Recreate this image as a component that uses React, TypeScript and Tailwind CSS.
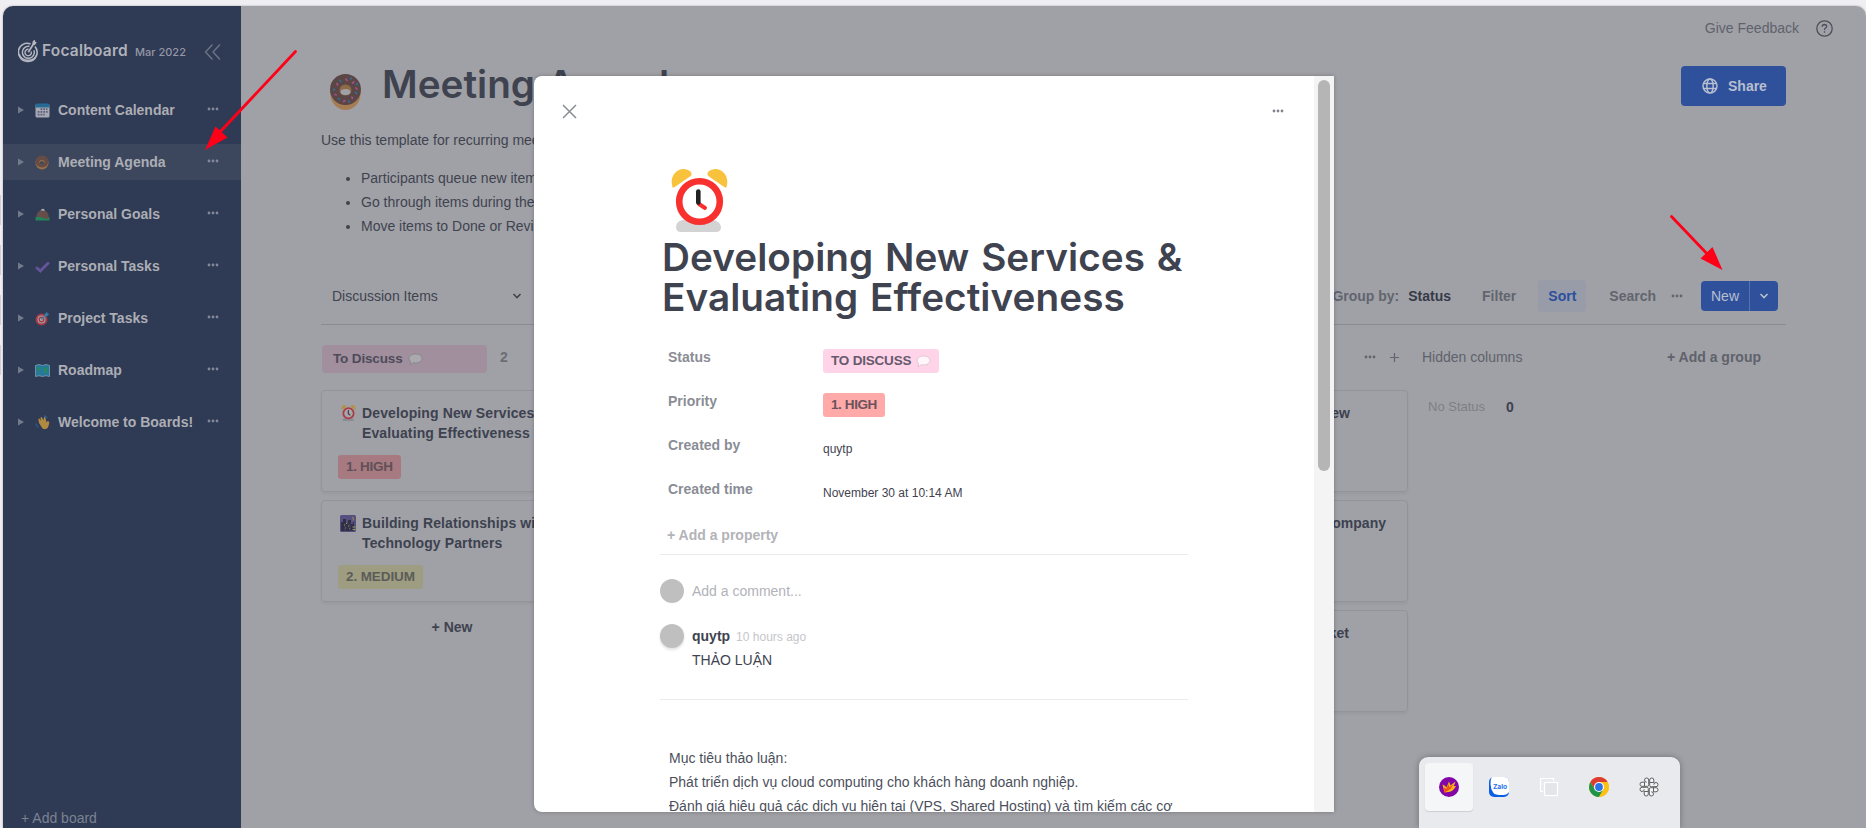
import React from 'react';

const Dots = ({ className = '' }: { className?: string }) => (
  <svg width="12" height="4" viewBox="0 0 12 4" className={`shrink-0 ${className}`} fill="currentColor">
    <circle cx="2" cy="2" r="1.4" />
    <circle cx="6" cy="2" r="1.4" />
    <circle cx="10" cy="2" r="1.4" />
  </svg>
);

const Chevron = () => (
  <svg width="10" height="8" viewBox="0 0 10 8" className="shrink-0" fill="none" stroke="currentColor" strokeWidth="1.6">
    <path d="M1.5 2 L5 5.5 L8.5 2" />
  </svg>
);

const Logo = () => (
  <svg width="21" height="24" viewBox="0 0 21 24" className="shrink-0" fill="none" stroke="#b4b7c0">
    <path d="M12.6 4.9 A9 9 0 0 0 2 8 A9.2 9.2 0 0 0 1.3 17 A9.3 9.3 0 0 0 18.5 16.5 A9 9 0 0 0 17 7.5" strokeWidth="1.6" />
    <path d="M1.3 15 A9.3 9.3 0 0 0 19 15 A9 7.500 0 0 1 1.3 15" fill="#b4b7c0" strokeWidth="1.2" />
    <path d="M11.5 7.4 A6 6 0 1 0 16 11.3" strokeWidth="1.5" />
    <path d="M10.5 10.3 A3.2 3.2 0 1 0 13.2 12.4" strokeWidth="1.4" />
    <path d="M10.3 13.3 L15.5 5" strokeWidth="1.7" />
    <path d="M14.2 5.5 L14.8 2 L17 .7 L17.2 2.7 L18.8 3.6 L16.6 6.2 Z" fill="#b4b7c0" stroke="none" />
  </svg>
);

const Clock = ({ size }: { size: number }) => (
  <svg width={size * 0.905} height={size} viewBox="0 0 57 63" className="shrink-0">
    <path d="M10 63 Q5 63 5 58 Q5 51 16 50 H38 Q50 52 50 58 Q50 63 45 63 Z" fill="#d3d3d3" />
    <path d="M1.5 18 C-2 7 6 0 12 0 Q17 0 20 3 Q21.500 6 19 7.500 L4.500 17.500 Q2 19.500 1.500 18 Z" fill="#f9c23c" />
    <path d="M55.500 18 C59 7 51 0 45 0 Q40 0 37 3 Q35.500 6 38 7.500 L52.500 17.500 Q55 19.500 55.500 18 Z" fill="#f9c23c" />
    <circle cx="28.500" cy="32.500" r="20.300" fill="#fff" stroke="#f8312f" strokeWidth="6.600" />
    <path d="M28 35 L34 39" stroke="#f8312f" strokeWidth="4" strokeLinecap="round" />
    <path d="M27.300 22.500 V33.500" stroke="#212121" strokeWidth="4.600" strokeLinecap="round" />
  </svg>
);

const SmallClock = () => (
  <svg width="15" height="16" viewBox="0 0 57 63" className="shrink-0">
    <path d="M10 63 Q5 63 5 58 Q5 51 16 50 H38 Q50 52 50 58 Q50 63 45 63 Z" fill="#8b8c91" />
    <path d="M1.5 18 C-2 7 6 0 12 0 Q17 0 20 3 Q21.500 6 19 7.500 L4.500 17.500 Q2 19.500 1.500 18 Z" fill="#b09348" />
    <path d="M55.500 18 C59 7 51 0 45 0 Q40 0 37 3 Q35.500 6 38 7.500 L52.500 17.500 Q55 19.500 55.500 18 Z" fill="#b09348" />
    <circle cx="28.500" cy="32.500" r="20.300" fill="#a6a6ab" stroke="#ab3c45" strokeWidth="7" />
    <path d="M28 22 V34 L34 39" fill="none" stroke="#4b3e48" strokeWidth="5" strokeLinecap="round" />
  </svg>
);

const Donut = ({ size }: { size: number }) => (
  <svg width={size * 0.86} height={size} viewBox="0 0 31 36" className="shrink-0">
    <ellipse cx="15.500" cy="20" rx="15" ry="16" fill="#a67c52" />
    <path d="M15.500 0 A15.300 15.300 0 0 1 15.500 31 A15.300 15.300 0 0 1 15.500 0" fill="#5b4645" />
    <ellipse cx="15.500" cy="16" rx="6" ry="5.500" fill="#8d6a48" />
    <ellipse cx="15.500" cy="18" rx="5" ry="3" fill="#a0a1a6" />
    <g strokeWidth="1.700" strokeLinecap="round" stroke="#9c5288">
      <path d="M16 5 l1 1.500 M24 8 l-1.500 1 M26 14 l1 1.200 M22 23 l.4 1.500 M13.500 27.500 l1.300 -.8 M5 20.500 l1.300 .5 M7 9.500 l.6 1.500" />
    </g>
    <g strokeWidth="1.700" strokeLinecap="round" stroke="#2e6f93">
      <path d="M10 6.300 l1 1 M21.500 4 l-1 1 M26.500 10.500 l1 -.8 M25.500 18.500 l1.300 .8 M18.500 27 l1 1 M8.500 24.500 l1 .8 M3.500 16 l1 -.8" />
    </g>
  </svg>
);

const SmallDonut = () => (
  <svg width="14" height="15" viewBox="0 0 14 15" className="shrink-0">
    <ellipse cx="7" cy="8" rx="6.500" ry="6.500" fill="#96704b" />
    <ellipse cx="7" cy="6.500" rx="6.300" ry="6" fill="#674c45" />
    <path d="M4.500 7.500 Q5 5.700 7 5.700 Q9 5.700 9.500 7.500" fill="none" stroke="#96704b" strokeWidth="1.200" />
    <ellipse cx="7" cy="7.700" rx="1.900" ry="1.100" fill="#3c475e" />
  </svg>
);

const Bubble = ({ fill, stroke }: { fill: string; stroke: string }) => (
  <svg width="15" height="13" viewBox="0 0 15 13" className="shrink-0">
    <path d="M7.500 1 C11.500 1 14 3 14 5.500 C14 8.200 11.300 10 7.500 10 Q6 10 5 9.700 Q4 11.500 1.800 11.500 Q2.800 10.300 2.500 8.500 Q1 7.300 1 5.500 C1 3 3.500 1 7.500 1 Z" fill={fill} stroke={stroke} strokeWidth=".9" />
  </svg>
);

const NightCity = () => (
  <svg width="16" height="17" viewBox="0 0 16 17" className="shrink-0">
    <rect width="16" height="17" rx="1.500" fill="#55507f" />
    <path d="M1 7 H3 V4 H6 V8 H8 V5 H11 V9 H13 V7 H14 V16 H1 Z" fill="#2f2f45" />
    <path d="M12 2 Q15 3 13 5.500 Q14 3.500 12 2 Z" fill="#a08c55" stroke="#a08c55" strokeWidth=".5" />
    <path d="M4 10 h1.200 M6 8.500 h1.200 M8 11 h1.200 M5 13 h1.200 M9 13.500 h1 M12.500 12 h3 M12.500 14.500 h3" stroke="#a3985a" strokeWidth="1.200" />
    <path d="M5 16 V11 M10 16 V8" stroke="#45456a" strokeWidth="1" />
  </svg>
);

const icons: Record<string, React.ReactNode> = {
  calendar: (
    <>
      <rect x=".5" y="1" width="14" height="13.500" rx="1.500" fill="#a6a8b4" />
      <path d="M.5 4.500 V2 Q.5 .5 2 .5 H13 Q14.500 .5 14.500 2 V4.500 Z" fill="#276a93" />
      <path d="M5.500 6.200 h7 M2.700 8.900 h10 M2.700 11.600 h7" stroke="#5d5f78" strokeWidth="1.700" strokeDasharray="1.800 1" />
    </>
  ),
  hill: (
    <>
      <path d="M1 12 Q1 6 4.500 4 Q7.500 1 10.500 4 Q14 6 14 12 Z" fill="#664d49" />
      <path d="M5.500 3.500 Q7.500 .3 10 3.300 L8.500 4 L7.500 3.500 Z" fill="#a7a9b0" />
      <path d="M.5 13.500 V10.500 Q4 9 8 11 Q12 12.500 14.500 10.500 V13.500 Z" fill="#25835b" />
    </>
  ),
  check: <path d="M2 9 L5.300 12 L13 4.300" fill="none" stroke="#64549a" strokeWidth="2.900" strokeLinecap="round" />,
  target: (
    <>
      <circle cx="6.500" cy="8.500" r="5" fill="#aaa4ac" stroke="#a33c46" strokeWidth="2" />
      <circle cx="6.500" cy="8.500" r="2.300" fill="#aaa4ac" stroke="#a33c46" strokeWidth="1.400" />
      <path d="M6.500 8.500 L11 4" stroke="#3a7aa3" strokeWidth="1.200" />
      <path d="M9.500 5.500 L9.800 3 L12 .8 L12.500 2.500 L14.300 3 L12 5.300 Z" fill="#3a7aa3" />
    </>
  ),
  map: (
    <>
      <path d="M.5 2.500 L4 1.500 L7.500 2.500 L11 1.500 L14.500 2.500 V13.500 L11 12.700 L7.500 13.500 L4 12.700 L.5 13.500 Z" fill="#28779c" stroke="#7f9fb0" strokeWidth=".8" />
      <path d="M2.500 4 H6 L5.500 7 L3.500 8 L5 10.500 L3.500 10.500 Z M8.500 5 L12.500 4 L12.500 9 L10.500 11 L9 8 Z" fill="#258a64" />
    </>
  ),
  wave: (
    <>
      <path d="M4 8 L3.300 4 Q4 3 5 4 L6 6 L5.500 2.500 Q6.500 1.500 7.200 2.700 L8.500 5.500 L8.800 2.500 Q10 1.500 10.500 3 L11.500 7.500 L12.500 6 Q14.500 6 14.300 8 L13 12.500 Q10.500 15.500 7.500 13.500 Z" fill="#b08a41" />
      <path d="M1 8.500 Q1 11 3.500 12.500 M9 1 Q11 1 12 3" fill="none" stroke="#2f5a94" strokeWidth="1.300" />
    </>
  ),
};

const boards = [
  { name: 'Content Calendar', icon: 'calendar' },
  { name: 'Meeting Agenda', icon: 'donut' },
  { name: 'Personal Goals', icon: 'hill' },
  { name: 'Personal Tasks', icon: 'check' },
  { name: 'Project Tasks', icon: 'target' },
  { name: 'Roadmap', icon: 'map' },
  { name: 'Welcome to Boards!', icon: 'wave' },
];

const Sidebar = () => (
  <aside className="flex w-[238px] shrink-0 flex-col bg-[#2f3a55]">
    <div className="flex h-[86px] items-center pl-[15px] pt-1">
      <Logo />
      <span className="ml-[3px] w-[93px] whitespace-nowrap font-[Inter] text-[15.500px] font-semibold tracking-[0.2px] text-[#b0b2ba]">Focalboard</span>
      <span className="mt-0.5 w-[69px] whitespace-nowrap font-[Inter] text-[11px] font-medium text-[#9498a6]">Mar 2022</span>
      <svg width="18" height="18" viewBox="0 0 18 18" className="mt-0.5 shrink-0" fill="none" stroke="#707789" strokeWidth="1.300">
        <path d="M8.500 1.500 L1.500 9 L8.500 16.500 M16 1.500 L9 9 L16 16.500" />
      </svg>
    </div>
    <nav className="flex flex-col gap-4">
      {boards.map((b) => (
        <div key={b.name} className={`flex h-9 items-center pl-[15px] ${b.icon === 'donut' ? 'bg-[#3c475e]' : ''}`}>
          <svg width="6" height="8" viewBox="0 0 6 8" className="shrink-0" fill="#737a8b"><path d="M0 .5 L6 4 L0 7.500 Z" /></svg>
          <span className="ml-[10px] flex h-[15px] w-[16px] items-center justify-center">
            {b.icon === 'donut' ? <SmallDonut /> : <svg width="15" height="15" viewBox="0 0 15 15">{icons[b.icon]}</svg>}
          </span>
          <span className="ml-2 w-[149px] whitespace-nowrap text-sm font-bold text-[#acaeb4]">{b.name}</span>
          <Dots className="mb-0.5 text-[#82889a]" />
        </div>
      ))}
    </nav>
    <div className="mt-auto h-5 pl-[18px] text-sm leading-5 text-[#7b8290]">+ Add board</div>
  </aside>
);

const Card = ({ children }: { children?: React.ReactNode }) => (
  <div className="h-[102px] rounded border border-[#93949a] px-4 pt-3 shadow-[0_2px_3px_rgba(0,0,0,0.05)]">{children}</div>
);

const CardTitle = ({ icon, lines }: { icon: React.ReactNode; lines: string[] }) => (
  <div className="flex">
    <span className="ml-[3px] mt-[2px] flex w-[21px] justify-start">{icon}</span>
    <span className="whitespace-nowrap text-sm font-bold leading-5 tracking-[0.12px] text-[#3d4150]">
      {lines.map((l) => <span key={l} className="block">{l}</span>)}
    </span>
  </div>
);

const BoardView = () => (
  <main className="flex min-w-0 flex-1 flex-col bg-[#a0a1a6] text-sm text-[#3f4350]">
    <div className="flex h-11 items-center justify-end pr-[33px]">
      <span className="mr-[17px] text-[#5f626c]">Give Feedback</span>
      <svg width="17" height="17" viewBox="0 0 17 17" fill="none" stroke="#4b4f5b" strokeWidth="1.300">
        <circle cx="8.500" cy="8.500" r="7.700" />
        <path d="M6.200 6.700 Q6.300 4.500 8.500 4.500 Q10.700 4.600 10.700 6.500 Q10.600 7.600 9.300 8.200 Q8.500 8.700 8.500 9.900 M8.500 11.300 V12.700" />
      </svg>
    </div>
    <div className="flex flex-1 flex-col px-20">
      <div className="flex h-[78px] items-start">
        <div className="ml-[9px] mt-6"><Donut size={36} /></div>
        <h1 className="ml-[21px] mt-[14px] whitespace-nowrap font-[Inter] text-[38.700px] font-[560] leading-10 text-[#3f4350] [word-spacing:2px]">Meeting Agenda</h1>
        <button className="ml-auto mt-4 flex h-10 w-[105px] items-center rounded bg-[#2f509b] pl-[21px] font-bold text-[#b7bfd0]">
          <svg width="16" height="16" viewBox="0 0 16 16" className="mr-[10px]" fill="none" stroke="currentColor" strokeWidth="1.500">
            <circle cx="8" cy="8" r="7" />
            <ellipse cx="8" cy="8" rx="3.200" ry="7" />
            <path d="M1.500 5.500 H14.500 M1.500 10.500 H14.500" />
          </svg>
          Share
        </button>
      </div>
      <p className="whitespace-nowrap leading-6">Use this template for recurring meeting agendas, like team meetings</p>
      <ul className="mt-[14px] list-disc whitespace-nowrap pl-10 leading-6">
        <li>Participants queue new items to discuss</li>
        <li>Go through items during the meeting</li>
        <li>Move items to Done or Revisit later</li>
      </ul>
      <div className="mt-[30px] flex h-[57px] shrink-0 items-center border-b border-[#898b92] font-bold text-[#62656f]">
        <span className="ml-[11px] w-[180px] font-normal text-[#3f4350]">Discussion Items</span>
        <span className="text-[#3f4350]"><Chevron /></span>
        <span className="ml-auto">Group by:</span>
        <span className="ml-[9px] text-[#363a48]">Status</span>
        <span className="ml-[31px]">Filter</span>
        <span className="ml-[22px] flex h-8 w-12 items-center justify-center rounded bg-[#989ca9] text-[#2c4f9e]">Sort</span>
        <span className="ml-[23px]">Search</span>
        <Dots className="ml-[15px] mr-[18px]" />
        <span className="mr-2 flex h-[30px] w-[77px] items-center rounded bg-[#2f509b] font-normal text-[#b7bfd0]">
          <span className="flex h-full w-[49px] items-center justify-center border-r border-[#5872ad]">New</span>
          <span className="flex flex-1 justify-center"><Chevron /></span>
        </span>
      </div>
      <div className="flex gap-[13px] pt-5">
        <section className="w-[262px] shrink-0">
          <div className="flex h-7 items-center">
            <span className="ml-px flex h-7 w-[165px] items-center rounded bg-[#a18f9e] pl-[11px] text-[13.500px] font-bold tracking-[-0.15px] text-[#4d4b5a]">
              <span className="mr-[5px]">To Discuss</span><Bubble fill="#aaa9ad" stroke="#86858c" />
            </span>
            <span className="-mt-1 ml-[13px] font-bold text-[#6b6d75]">2</span>
          </div>
          <div className="mt-[17px] flex flex-col gap-2">
            <Card>
              <CardTitle icon={<SmallClock />} lines={['Developing New Services &', 'Evaluating Effectiveness']} />
              <span className="mt-3 inline-flex h-6 items-center rounded-[3px] bg-[#a67a80] px-2 pb-px text-[13.500px] font-bold tracking-[-0.3px] text-[#5f5058]">1. HIGH</span>
            </Card>
            <Card>
              <CardTitle icon={<span className="-ml-px"><NightCity /></span>} lines={['Building Relationships with', 'Technology Partners']} />
              <span className="mt-3 inline-flex h-6 items-center rounded-[3px] bg-[#9e9d82] px-2 pb-px text-[13.500px] font-bold tracking-[-0.1px] text-[#5b5c58]">2. MEDIUM</span>
            </Card>
          </div>
          <div className="mt-[15px] text-center font-bold leading-5">+ New</div>
        </section>
        <section className="w-[262px] shrink-0" />
        <section className="w-[262px] shrink-0" />
        <section className="w-[262px] shrink-0 text-right font-bold text-[#3d4150]">
          <div className="flex h-7 items-center justify-end pb-1 pr-[9px] text-[#62656f]">
            <Dots className="mr-[14px]" />
            <svg width="9" height="9" viewBox="0 0 9 9" stroke="currentColor" strokeWidth="1.200"><path d="M4.500 0 V9 M0 4.500 H9" /></svg>
          </div>
          <div className="mt-[17px] flex flex-col gap-2 leading-5">
            <Card><span className="mr-[41px]">new</span></Card>
            <Card><span className="mr-[5px]">company</span></Card>
            <Card><span className="mr-[42px]">market</span></Card>
          </div>
        </section>
        <section className="flex-1 text-[#5f626c]">
          <div className="flex h-7 items-center justify-between pb-1 pr-[25px]">
            <span className="ml-px">Hidden columns</span>
            <span className="font-bold">+ Add a group</span>
          </div>
          <div className="ml-[7px] mt-6 flex leading-5">
            <span className="w-[78px] text-[13px] text-[#7d7f87]">No Status</span>
            <span className="font-bold text-[#3d4150]">0</span>
          </div>
        </section>
      </div>
    </div>
  </main>
);

const Property = ({ label, children }: { label: string; children: React.ReactNode }) => (
  <div className="flex h-11 items-start">
    <span className="w-[155px] text-sm font-bold leading-5 text-[#8b8d95]">{label}</span>
    {children}
  </div>
);

const Dialog = () => (
  <div className="absolute left-[534px] top-[76px] flex h-[736px] w-[800px] overflow-hidden rounded-l-[8px] bg-white text-sm text-[#3f4350] shadow-[0_0_4px_rgba(0,0,0,0.25)]">
    <div className="flex flex-1 flex-col overflow-hidden">
      <div className="flex h-[93px] shrink-0 items-start justify-between pl-7 pr-[30px] pt-[28px]">
        <svg width="15" height="15" viewBox="0 0 15 15" stroke="#8b8d95" strokeWidth="1.500"><path d="M1 1 L14 14 M14 1 L1 14" /></svg>
        <Dots className="mt-[5px] text-[#82858e]" />
      </div>
      <div className="w-[654px] shrink-0 pl-[126px]">
        <div className="ml-[11px] h-[68px]"><Clock size={63} /></div>
        <h2 className="ml-[2px] whitespace-nowrap font-[Inter] text-[38.700px] font-[560] leading-10 tracking-[0.05px] [word-spacing:2px]">Developing New Services &amp;<br />Evaluating Effectiveness</h2>
        <div className="ml-2 mt-[30px]">
          <Property label="Status">
            <span className="mt-[2px] flex h-6 items-center rounded-[3px] bg-[#ffd4e9] px-2 text-[13.500px] font-bold tracking-[-0.2px] text-[#66596c]">
              <span className="mr-[5px] pb-px">TO DISCUSS</span><Bubble fill="#fff5fa" stroke="#d9c4ce" />
            </span>
          </Property>
          <Property label="Priority">
            <span className="mt-[2px] flex h-6 items-center rounded-[3px] bg-[#ffa9a9] px-2 pb-px text-[13.500px] font-bold tracking-[-0.4px] text-[#6b525b]">1. HIGH</span>
          </Property>
          <Property label="Created by"><span className="pt-1 text-xs leading-5">quytp</span></Property>
          <Property label="Created time"><span className="pt-1 text-xs leading-5">November 30 at 10:14 AM</span></Property>
        </div>
        <div className="ml-[7px] mt-[2px] h-[29px] font-bold leading-5 text-[#b2b3b8]">+ Add a property</div>
        <div className="h-[146px] w-[528px] border-y border-[#ebebed] pt-6">
          <div className="flex h-[45px] items-start">
            <span className="mr-2 h-6 w-6 rounded-full bg-[#bfbfbf]" />
            <span className="leading-6 text-[#b2b3b8]">Add a comment...</span>
          </div>
          <div className="flex items-start">
            <span className="mr-2 h-6 w-6 shrink-0 rounded-full bg-[#bfbfbf] shadow-[0_2px_3px_rgba(0,0,0,0.12)]" />
            <div className="leading-6">
              <div><b>quytp</b><span className="ml-[6px] text-xs text-[#c5c6ca]">10 hours ago</span></div>
              <div>THẢO LUẬN</div>
            </div>
          </div>
        </div>
        <div className="ml-[9px] mt-[46px] whitespace-nowrap leading-6 text-[#4b4f5b]">
          <p>Mục tiêu thảo luận:</p>
          <p>Phát triển dịch vụ cloud computing cho khách hàng doanh nghiệp.</p>
          <p>Đánh giá hiệu quả các dịch vụ hiện tại (VPS, Shared Hosting) và tìm kiếm các cơ</p>
        </div>
      </div>
    </div>
    <div className="w-5 shrink-0 bg-[#f4f4f5] px-1 pt-1">
      <div className="h-[391px] rounded-full bg-[#b5b5b5]" />
    </div>
  </div>
);

const Tray = () => (
  <div className="absolute left-[1419px] top-[757px] flex h-[71px] w-[261px] items-start gap-[2px] rounded-t-[9px] bg-[#e9eaee] px-[6px] pt-[6px] shadow-[0_0_6px_rgba(0,0,0,0.3)]">
    <span className="flex h-12 w-12 items-center justify-center rounded bg-[#f5f6f8] shadow-[0_1px_1px_rgba(0,0,0,0.12)]">
      <svg width="20" height="20" viewBox="0 0 20 20">
        <circle cx="10" cy="10" r="10" fill="#8206a5" />
        <path d="M5.500 15.500 L3.500 7.500 Q6.500 8.500 7.500 10.500 L10 4.500 L11.500 8.500 L16.500 4.500 Q16 7 14.500 9 L17 9 Q14.500 14.500 9.500 15 Q7.500 15 5.500 15.500 Z" fill="#f8b416" />
        <path d="M5.500 15.500 L5 10.500 L7.500 12 L9.500 7 L10.300 10.500 L14 7.500 L11.500 12 Z" fill="#f34a1c" />
      </svg>
    </span>
    <span className="flex h-12 w-12 items-center justify-center">
      <svg width="20" height="20" viewBox="0 0 20 20">
        <rect x="0" y="0" width="20" height="20" rx="5" fill="#0b5fe6" />
        <path d="M3 0 H15 Q20 0 20 5 V15 Q18 18.500 13 18 Q6 18 4.500 16 Q1.500 12 1.500 7 Q1.500 2 3 0 Z" fill="#fff" />
        <text x="11" y="12.300" fontSize="6.700" fontWeight="bold" textAnchor="middle" fill="#2873eb" fontFamily="Inter, sans-serif">Zalo</text>
      </svg>
    </span>
    <span className="flex h-12 w-12 items-center justify-center">
      <svg width="20" height="20" viewBox="0 0 20 20" fill="none" stroke="#fff" strokeWidth="1.200">
        <path d="M4 14.500 H1.500 V1.500 H14.500 V4" />
        <rect x="5.500" y="5.500" width="13" height="13" fill="#e4e5e9" />
      </svg>
    </span>
    <span className="flex h-12 w-12 items-center justify-center">
      <svg width="20" height="20" viewBox="0 0 20 20">
        <circle cx="10" cy="10" r="10" fill="#fbc116" />
        <path d="M10 10 L18.660 5 A10 10 0 0 0 1.340 5 L5.670 12.500 Z" fill="#dd3d31" />
        <path d="M10 10 L5.670 12.500 L1.340 5 A10 10 0 0 0 10 20 L14.330 12.500 Z" fill="#209447" />
        <path d="M10 5 H18.660 A10 10 0 0 1 10 20 L14.330 12.500 Z" fill="#fbc116" />
        <circle cx="10" cy="10" r="5" fill="#fff" />
        <circle cx="10" cy="10" r="3.900" fill="#2a74e8" />
      </svg>
    </span>
    <span className="flex h-12 w-12 items-center justify-center">
      <svg width="20" height="20" viewBox="0 0 20 20" fill="#f4f4f5" stroke="#606164" strokeWidth="1">
        {[0, 90, 180, 270].map((a) => (
          <g key={a} transform={`rotate(${a} 10 10)`}>
            <path d="M6 5.200 H3 Q1 5.200 1 7.200 Q1 9.300 3 9.300 H8.500 Q9.700 9.300 9.700 7.500 V3 Q9.700 1 7.700 1 Q5.500 1 5.500 3 Q5.500 5.200 7.700 5.200" />
            <path d="M5.500 5.200 V9.300" />
          </g>
        ))}
      </svg>
    </span>
  </div>
);

export default function App() {
  return (
    <div className="relative flex h-[828px] w-full overflow-hidden bg-[#eeeef3] pl-[3px] pt-[6px] font-['Liberation_Sans',Arial,sans-serif]">
      <div className="absolute left-0 top-[195px] flex flex-col gap-5">
        {[0, 1, 2, 3].map((i) => <span key={i} className="h-[30px] w-px bg-[#cfcfcf]" />)}
      </div>
      <div className="flex min-w-0 flex-1 overflow-hidden rounded-t-[10px] shadow-[0_0_2px_rgba(0,0,0,0.35)]">
        <Sidebar />
        <BoardView />
      </div>
      <Dialog />
      <svg className="absolute left-[204px] top-[49px]" width="95" height="103" viewBox="0 0 95 103">
        <path d="M91.500 2.500 L15 84" stroke="#ff0019" strokeWidth="2.800" strokeLinecap="round" />
        <path d="M1 101 L11.500 77.500 L23.500 88.500 Z" fill="#ff0019" />
      </svg>
      <svg className="absolute left-[1668px] top-[213px]" width="57" height="59" viewBox="0 0 57 59">
        <path d="M3.500 3.500 L44 46" stroke="#ff0019" strokeWidth="2.800" strokeLinecap="round" />
        <path d="M54.500 57 L32.500 45.500 L44.500 34 Z" fill="#ff0019" />
      </svg>
      <Tray />
    </div>
  );
}
